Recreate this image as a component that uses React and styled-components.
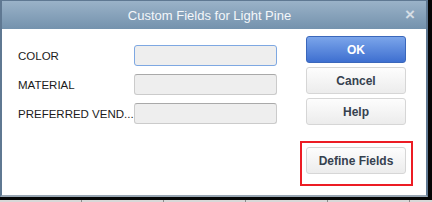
import React from "react";
import styled, { createGlobalStyle } from "styled-components";

const GlobalStyle = createGlobalStyle`
  html, body {
    margin: 0;
    padding: 0;
    background: #050505;
  }
  body {
    font-family: "Liberation Sans", Arial, sans-serif;
  }
`;

const Page = styled.div`
  width: 432px;
  height: 202px;
  background: #050505;
  display: flex;
  flex-direction: column;
  overflow: hidden;
`;

const Window = styled.div`
  width: 428px;
  height: 197px;
  box-sizing: border-box;
  border: 2px solid #5f7892;
  border-bottom-color: #98a6b3;
  border-top-width: 1px;
  background: #ffffff;
  display: flex;
  flex-direction: column;
`;

const TitleBar = styled.div`
  height: 28px;
  flex-shrink: 0;
  display: flex;
  align-items: center;
  background: linear-gradient(#9ab2c8, #7492ad);
  padding: 0 9px 0 0;
`;

const Title = styled.div`
  flex: 1;
  text-align: center;
  color: #f4f7fa;
  font-size: 13px;
  padding-left: 14px;
`;

const Close = styled.span`
  color: #d5dde5;
  font-size: 17px;
  font-weight: bold;
  width: 14px;
  text-align: center;
`;

const Content = styled.div`
  flex: 1;
  display: flex;
  padding: 0 12px 0 16px;
`;

const Form = styled.div`
  display: flex;
  flex-direction: column;
  gap: 8px;
  padding-top: 16px;
`;

const Row = styled.div`
  display: flex;
  align-items: center;
`;

const Label = styled.div`
  width: 116px;
  font-size: 11.5px;
  color: #1b1b1b;
  white-space: nowrap;
  overflow: hidden;
`;

const Field = styled.div`
  width: 143px;
  height: 21px;
  box-sizing: border-box;
  background: #eeeeee;
  border: 1px solid ${({ focused }) => (focused ? "#7ea8e2" : "#cbcbcb")};
  border-top-color: ${({ focused }) => (focused ? "#7ea8e2" : "#a9a9a9")};
  border-radius: 3px;
`;

const Buttons = styled.div`
  margin-left: 23px;
  width: 113px;
  display: flex;
  flex-direction: column;
  align-items: flex-start;
  padding-top: 7px;
  gap: 4px;
`;

const Button = styled.div`
  width: 100px;
  height: 27px;
  margin-left: ${({ inset }) => (inset ? "0" : "6px")};
  box-sizing: border-box;
  border-radius: 3px;
  display: flex;
  align-items: center;
  justify-content: center;
  font-size: 12px;
  font-weight: bold;
  color: ${({ primary }) => (primary ? "#ffffff" : "#36414f")};
  background: ${({ primary }) =>
    primary
      ? "linear-gradient(#7ba5ea, #3e6fd0)"
      : "linear-gradient(#fdfdfd, #ececec)"};
  border: 1px solid ${({ primary }) => (primary ? "#3a67bb" : "#d6d6d6")};
`;

const Highlight = styled.div`
  margin-top: 12px;
  border: 2px solid #ec1c24;
  padding: 4px;
  width: 113px;
  height: 45px;
  box-sizing: border-box;
`;

const Strip = styled.div`
  margin-top: 3px;
  height: 2px;
  width: 432px;
  background: repeating-linear-gradient(90deg, #d8d8d8 0 81px, #8a8a8a 81px 82px);
`;

const fields = [
  { label: "COLOR", focused: true },
  { label: "MATERIAL" },
  { label: "PREFERRED VEND..." },
];

const App = () => (
  <>
    <GlobalStyle />
    <Page>
      <Window>
        <TitleBar>
          <Title>Custom Fields for Light Pine</Title>
          <Close>×</Close>
        </TitleBar>
        <Content>
          <Form>
            {fields.map((f) => (
              <Row key={f.label}>
                <Label>{f.label}</Label>
                <Field focused={f.focused} />
              </Row>
            ))}
          </Form>
          <Buttons>
            <Button primary>OK</Button>
            <Button>Cancel</Button>
            <Button>Help</Button>
            <Highlight>
              <Button inset>Define Fields</Button>
            </Highlight>
          </Buttons>
        </Content>
      </Window>
      <Strip />
    </Page>
  </>
);

export default App;
